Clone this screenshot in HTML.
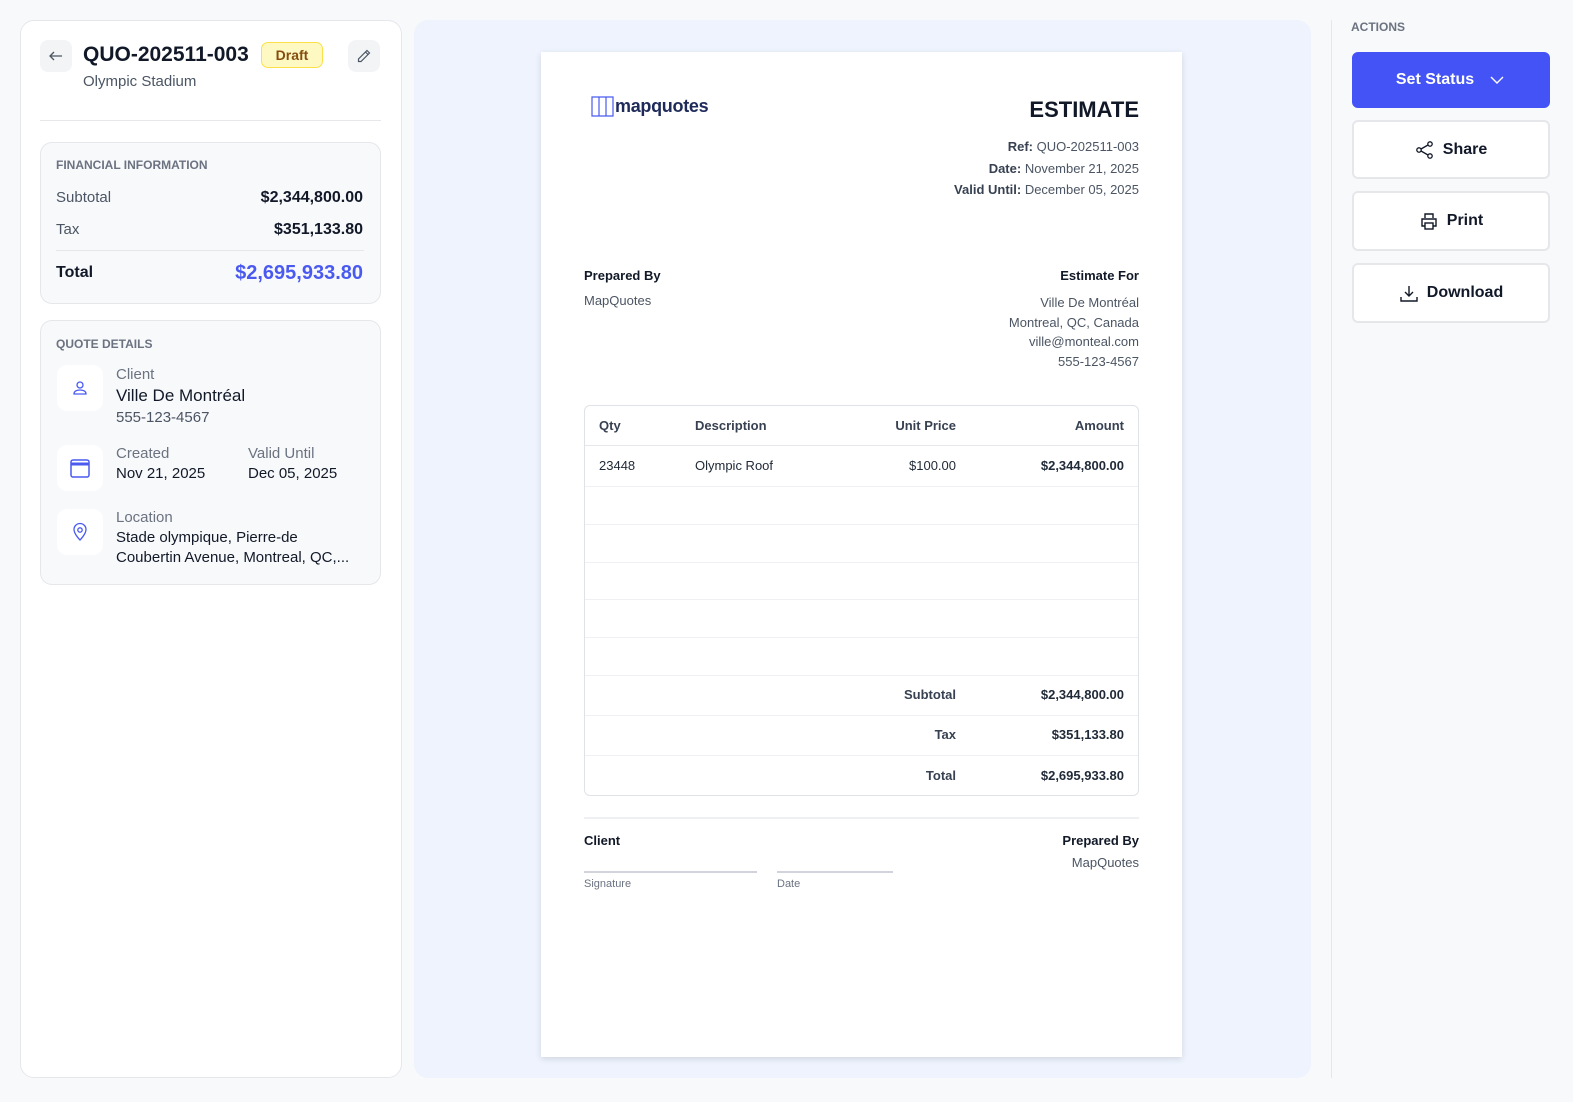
<!DOCTYPE html>
<html><head><meta charset="utf-8"><style>
*{margin:0;padding:0;box-sizing:border-box}
body{width:1573px;height:1102px;background:#f8f9fb;font-family:"Liberation Sans",sans-serif;color:#111827;position:relative;overflow:hidden}
.a{position:absolute;white-space:nowrap}
.r{text-align:right}
.card{position:absolute;background:#fff;border:1px solid #e5e7eb;border-radius:14px}
.sub{position:absolute;background:#f8f9fb;border:1px solid #e5e7eb;border-radius:12px}
.ib{position:absolute;width:46px;height:46px;background:#fff;border-radius:10px;display:flex;align-items:center;justify-content:center}
.btn{position:absolute;left:1352px;width:198px;border:2px solid #e5e7eb;border-radius:6px;background:#fff;display:flex;align-items:center;justify-content:center;font-weight:bold;font-size:16px;color:#111827;gap:8px}
.hl{position:absolute;height:1px;background:#e5e7eb}
.th{font-size:13px;font-weight:bold;color:#374151}
.td{font-size:13px;color:#1f2937}
</style></head><body>

<div class="card" style="left:20px;top:20px;width:382px;height:1058px"></div>
<div class="a" style="left:40px;top:40px;width:32px;height:32px;background:#f3f4f6;border-radius:8px;display:flex;align-items:center;justify-content:center">
<svg width="16" height="16" viewBox="0 0 16 16" fill="none" stroke="#4b5563" stroke-width="1.3"><path d="M14 8H2M6 4L2 8l4 4"/></svg></div>
<div class="a" style="left:83px;top:42px;font-size:21px;font-weight:bold;line-height:26px">QUO-202511-003</div>
<div class="a" style="left:261px;top:42px;width:62px;height:26px;background:#fef9c3;border:1px solid #fde047;border-radius:7px;color:#854d0e;font-weight:bold;font-size:14px;text-align:center;line-height:24px">Draft</div>
<div class="a" style="left:348px;top:40px;width:32px;height:32px;background:#f3f4f6;border-radius:8px;display:flex;align-items:center;justify-content:center">
<svg width="16" height="16" viewBox="0 0 16 16" fill="none" stroke="#4b5563" stroke-width="1.2"><path d="M11 2.5l2.5 2.5L5 13.5H2.5V11zM9.5 4l2.5 2.5"/></svg></div>
<div class="a" style="left:83px;top:73px;font-size:15px;color:#4b5563;line-height:18px">Olympic Stadium</div>
<div class="hl" style="left:40px;top:120px;width:341px"></div>

<div class="sub" style="left:40px;top:142px;width:341px;height:162px"></div>
<div class="a" style="left:56px;top:158px;font-size:12px;font-weight:bold;color:#6b7280;line-height:15px">FINANCIAL INFORMATION</div>
<div class="a" style="left:56px;top:189px;font-size:15px;color:#4b5563;line-height:18px">Subtotal</div>
<div class="a r" style="right:1210px;top:188px;font-size:16px;font-weight:bold;line-height:19px">$2,344,800.00</div>
<div class="a" style="left:56px;top:221px;font-size:15px;color:#4b5563;line-height:18px">Tax</div>
<div class="a r" style="right:1210px;top:220px;font-size:16px;font-weight:bold;line-height:19px">$351,133.80</div>
<div class="hl" style="left:56px;top:250px;width:308px"></div>
<div class="a" style="left:56px;top:263px;font-size:16px;font-weight:bold;line-height:19px">Total</div>
<div class="a r" style="right:1210px;top:261px;font-size:20px;font-weight:bold;color:#4a5af0;line-height:24px">$2,695,933.80</div>

<div class="sub" style="left:40px;top:320px;width:341px;height:265px"></div>
<div class="a" style="left:56px;top:337px;font-size:12px;font-weight:bold;color:#6b7280;line-height:15px">QUOTE DETAILS</div>
<div class="ib" style="left:57px;top:365px"><svg width="18" height="18" viewBox="0 0 18 18" fill="none" stroke="#4a5af0" stroke-width="1.3"><circle cx="9" cy="6" r="3"/><path d="M3 15c0-3 3-4 6-4s6 1 6 4z"/></svg></div>
<div class="a" style="left:116px;top:366px;font-size:15px;color:#6b7280;line-height:18px">Client</div>
<div class="a" style="left:116px;top:386px;font-size:17px;color:#111827;line-height:20px">Ville De Montréal</div>
<div class="a" style="left:116px;top:409px;font-size:15px;color:#4b5563;line-height:18px">555-123-4567</div>
<div class="ib" style="left:57px;top:445px"><svg width="22" height="22" viewBox="0 0 22 22" fill="none" stroke="#4a5af0" stroke-width="1.5"><rect x="2" y="3" width="18" height="17" rx="2"/><path d="M2 7h18" stroke-width="3"/></svg></div>
<div class="a" style="left:116px;top:445px;font-size:15px;color:#6b7280;line-height:18px">Created</div>
<div class="a" style="left:116px;top:465px;font-size:15px;line-height:18px">Nov 21, 2025</div>
<div class="a" style="left:248px;top:445px;font-size:15px;color:#6b7280;line-height:18px">Valid Until</div>
<div class="a" style="left:248px;top:465px;font-size:15px;line-height:18px">Dec 05, 2025</div>
<div class="ib" style="left:57px;top:509px"><svg width="18" height="20" viewBox="0 0 18 20" fill="none" stroke="#4a5af0" stroke-width="1.3"><path d="M9 18s6-6 6-10.5A6 6 0 003 7.5C3 12 9 18 9 18z"/><circle cx="9" cy="8" r="2.2"/></svg></div>
<div class="a" style="left:116px;top:509px;font-size:15px;color:#6b7280;line-height:18px">Location</div>
<div class="a" style="left:116px;top:529px;font-size:15px;line-height:18px">Stade olympique, Pierre-de</div>
<div class="a" style="left:116px;top:549px;font-size:15px;line-height:18px">Coubertin Avenue, Montreal, QC,...</div>

<div class="a" style="left:414px;top:20px;width:897px;height:1058px;background:#eef3fd;border-radius:14px"></div>
<div class="a" style="left:541px;top:52px;width:641px;height:1005px;background:#fff;box-shadow:0 2px 6px rgba(0,0,0,.12)"></div>

<svg class="a" style="left:591px;top:95px" width="24" height="22" viewBox="0 0 24 22" fill="none" stroke="#4a5af0" stroke-width="1.2"><path d="M1 2l7 0v19H1zM8 2h7v19H8zM15 2h7v19h-7z"/></svg>
<div class="a" style="left:615px;top:96px;font-size:18px;font-weight:bold;color:#1e2a5a;line-height:20px;letter-spacing:-0.3px">mapquotes</div>
<div class="a r" style="right:434px;top:97px;font-size:22px;font-weight:bold;line-height:26px">ESTIMATE</div>
<div class="a r" style="right:434px;top:139px;font-size:13px;color:#4b5563;line-height:16px"><b style="color:#374151">Ref:</b> QUO-202511-003</div>
<div class="a r" style="right:434px;top:161px;font-size:13px;color:#4b5563;line-height:16px"><b style="color:#374151">Date:</b> November 21, 2025</div>
<div class="a r" style="right:434px;top:182px;font-size:13px;color:#4b5563;line-height:16px"><b style="color:#374151">Valid Until:</b> December 05, 2025</div>

<div class="a" style="left:584px;top:268px;font-size:13px;font-weight:bold;line-height:16px">Prepared By</div>
<div class="a" style="left:584px;top:293px;font-size:13px;color:#4b5563;line-height:16px">MapQuotes</div>
<div class="a r" style="right:434px;top:268px;font-size:13px;font-weight:bold;line-height:16px">Estimate For</div>
<div class="a r" style="right:434px;top:293px;font-size:13px;color:#4b5563;line-height:19.7px">Ville De Montréal<br>Montreal, QC, Canada<br>ville@monteal.com<br>555-123-4567</div>

<div class="a" style="left:584px;top:405px;width:555px;height:391px;border:1px solid #dfe2e7;border-radius:6px"></div>
<div class="hl" style="left:585px;top:445px;width:553px;background:#e5e7eb"></div>
<div class="hl" style="left:585px;top:486px;width:553px;background:#eef0f3"></div>
<div class="hl" style="left:585px;top:524px;width:553px;background:#eef0f3"></div>
<div class="hl" style="left:585px;top:562px;width:553px;background:#eef0f3"></div>
<div class="hl" style="left:585px;top:599px;width:553px;background:#eef0f3"></div>
<div class="hl" style="left:585px;top:637px;width:553px;background:#eef0f3"></div>
<div class="hl" style="left:585px;top:675px;width:553px;background:#eef0f3"></div>
<div class="hl" style="left:585px;top:715px;width:553px;background:#eef0f3"></div>
<div class="hl" style="left:585px;top:755px;width:553px;background:#eef0f3"></div>
<div class="a th" style="left:599px;top:418px;line-height:16px">Qty</div>
<div class="a th" style="left:695px;top:418px;line-height:16px">Description</div>
<div class="a th r" style="right:617px;top:418px;line-height:16px">Unit Price</div>
<div class="a th r" style="right:449px;top:418px;line-height:16px">Amount</div>
<div class="a td" style="left:599px;top:458px;line-height:16px">23448</div>
<div class="a td" style="left:695px;top:458px;line-height:16px">Olympic Roof</div>
<div class="a td r" style="right:617px;top:458px;line-height:16px">$100.00</div>
<div class="a td r" style="right:449px;top:458px;line-height:16px;font-weight:bold">$2,344,800.00</div>
<div class="a th r" style="right:617px;top:687px;line-height:16px">Subtotal</div>
<div class="a td r" style="right:449px;top:687px;line-height:16px;font-weight:bold">$2,344,800.00</div>
<div class="a th r" style="right:617px;top:727px;line-height:16px">Tax</div>
<div class="a td r" style="right:449px;top:727px;line-height:16px;font-weight:bold">$351,133.80</div>
<div class="a th r" style="right:617px;top:768px;line-height:16px">Total</div>
<div class="a td r" style="right:449px;top:768px;line-height:16px;font-weight:bold">$2,695,933.80</div>

<div class="hl" style="left:584px;top:817px;width:555px;background:#eef0f3;height:2px"></div>
<div class="a" style="left:584px;top:833px;font-size:13px;font-weight:bold;line-height:16px">Client</div>
<div class="a" style="left:584px;top:871px;width:173px;height:2px;background:#d1d5db"></div>
<div class="a" style="left:777px;top:871px;width:116px;height:2px;background:#d1d5db"></div>
<div class="a" style="left:584px;top:877px;font-size:11px;color:#6b7280;line-height:14px">Signature</div>
<div class="a" style="left:777px;top:877px;font-size:11px;color:#6b7280;line-height:14px">Date</div>
<div class="a r" style="right:434px;top:833px;font-size:13px;font-weight:bold;line-height:16px">Prepared By</div>
<div class="a r" style="right:434px;top:855px;font-size:13px;color:#4b5563;line-height:16px">MapQuotes</div>

<div class="a" style="left:1331px;top:20px;width:1px;height:1058px;background:#e5e7eb"></div>
<div class="a" style="left:1351px;top:20px;font-size:12px;font-weight:bold;color:#6b7280;line-height:15px">ACTIONS</div>
<div class="btn" style="top:52px;height:56px;background:#4353f5;border-color:#4353f5;color:#fff">Set Status <svg width="18" height="18" viewBox="0 0 18 18" fill="none" stroke="#fff" stroke-width="1.4" style="margin-left:6px"><path d="M3 6l6 6 6-6"/></svg></div>
<div class="btn" style="top:120px;height:59px"><svg width="20" height="20" viewBox="0 0 20 20" fill="none" stroke="#111827" stroke-width="1.3"><circle cx="15" cy="4" r="2.2"/><circle cx="4" cy="10" r="2.2"/><circle cx="15" cy="16" r="2.2"/><path d="M6 9l7-4M6 11l7 4"/></svg>Share</div>
<div class="btn" style="top:191px;height:60px"><svg width="20" height="20" viewBox="0 0 20 20" fill="none" stroke="#111827" stroke-width="1.4"><path d="M6 7V3h8v4M6 15H3V8h14v7h-3"/><rect x="6" y="12" width="8" height="6"/></svg>Print</div>
<div class="btn" style="top:263px;height:60px"><svg width="20" height="20" viewBox="0 0 20 20" fill="none" stroke="#111827" stroke-width="1.4"><path d="M10 3v10M6 9l4 4 4-4M2 14v4h16v-4"/></svg>Download</div>

</body></html>
